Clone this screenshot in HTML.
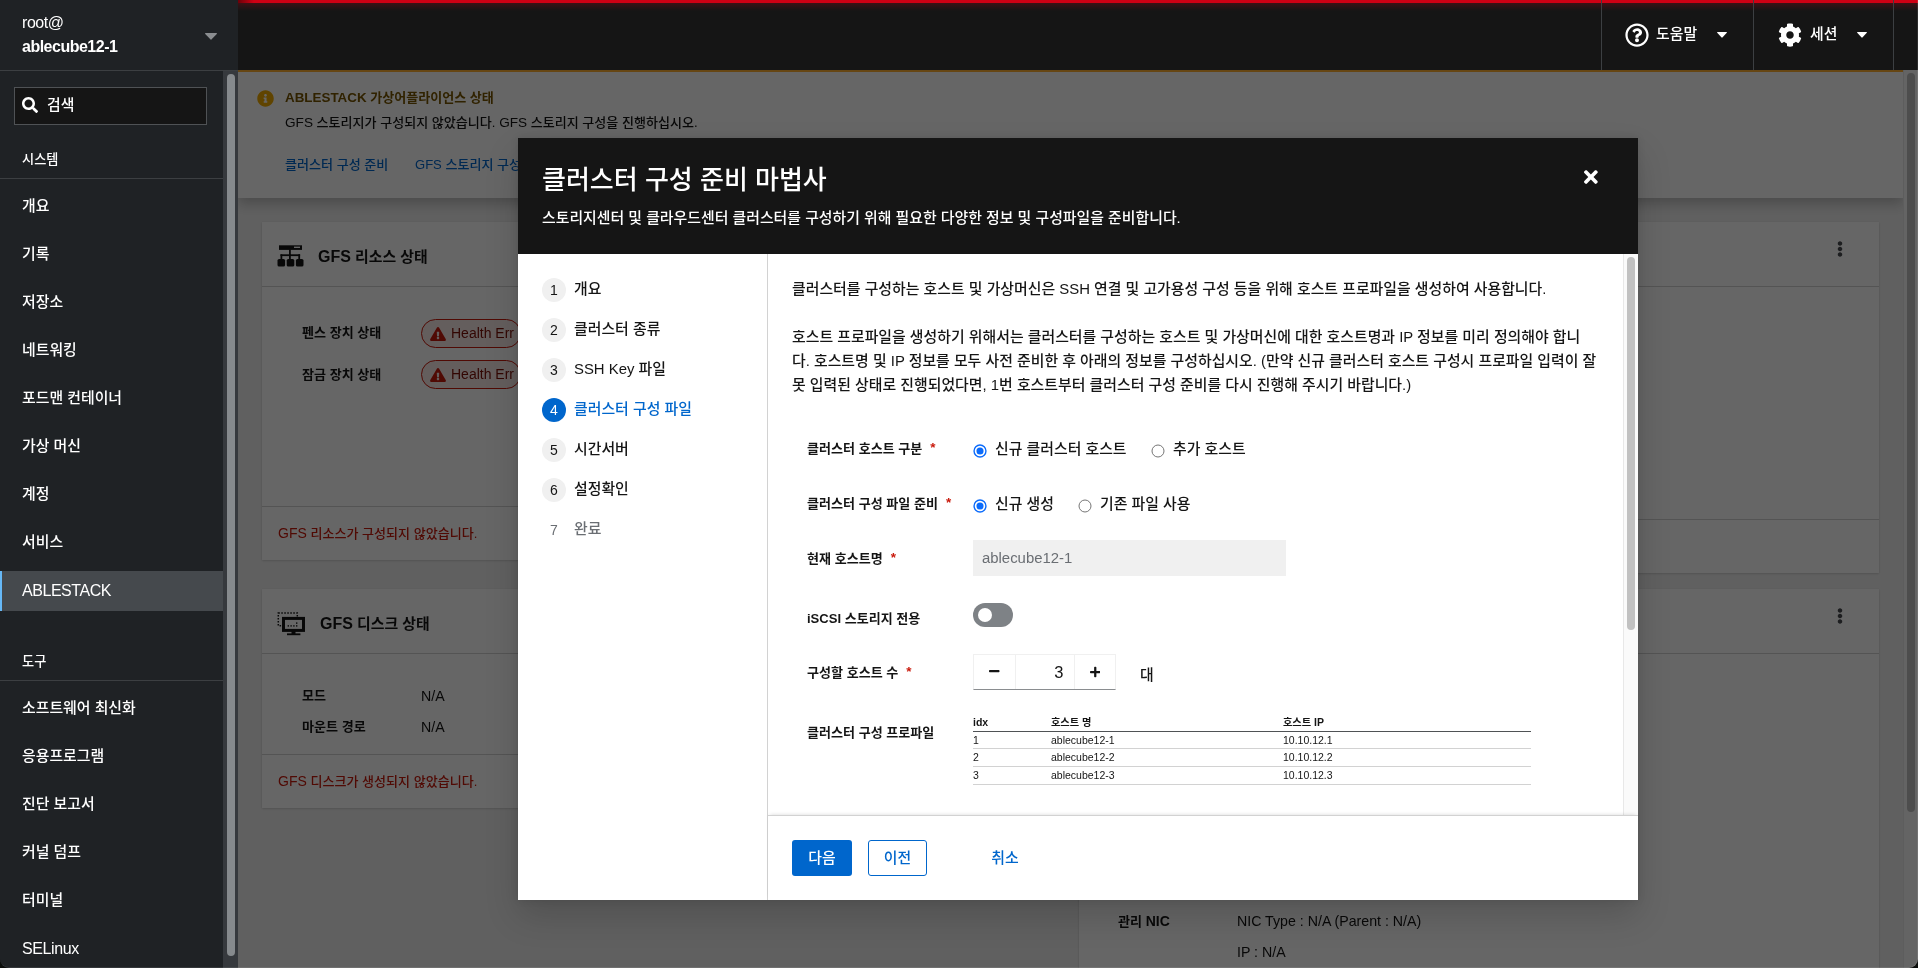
<!DOCTYPE html>
<html lang="ko">
<head>
<meta charset="utf-8">
<title>ABLESTACK - ablecube12-1</title>
<style>
*{box-sizing:border-box;margin:0;padding:0}
html,body{width:1918px;height:968px;overflow:hidden;background:#151515}
body{position:relative;font-family:"Liberation Sans","Noto Sans CJK KR",sans-serif;font-size:16px;font-weight:500;color:#151515;-webkit-font-smoothing:antialiased}
.abs{position:absolute}
svg{display:block}
/* ---------- shell: sidebar ---------- */
#side{position:absolute;left:0;top:0;width:238px;height:968px;background:#1f2225;color:#fff}
#hostsel{position:absolute;left:0;top:0;width:238px;height:71px;border-bottom:1px solid #3c3f42}
#hostsel .u{position:absolute;left:22px;top:12px;font-size:16px;line-height:22px;color:#fff;letter-spacing:-.45px}
#hostsel .h{position:absolute;left:22px;top:35px;font-size:16px;line-height:24px;font-weight:700;color:#fff;letter-spacing:-.5px}
#sbtrack{position:absolute;left:223px;top:71px;width:15px;height:897px;background:#36393d}
#sbthumb{position:absolute;left:4px;top:3px;width:8px;height:882px;border-radius:4px;background:#868a8d}
#search{position:absolute;left:14px;top:87px;width:193px;height:38px;background:#151515;border:1px solid #4f5255}
#search span{position:absolute;left:32px;top:5px;font-weight:500;font-size:14.9px;line-height:24px;color:#fff}
.sect{position:absolute;left:22px;font-size:13.2px;line-height:20px;font-weight:500;color:#fff}
.sline{position:absolute;left:0;width:223px;height:1px;background:#3c3f42}
.ni{position:absolute;left:0;width:223px;height:40px;padding:8px 0 8px 22px;font-weight:500;font-size:14.9px;line-height:24px;color:#fff;white-space:nowrap}
.ni.act{background:#45494d;border-left:2px solid #66b8f6;padding-left:20px;font-weight:400;font-size:16px;letter-spacing:-.45px}
/* ---------- shell: top bar ---------- */
#top{position:absolute;left:238px;top:0;width:1680px;height:70px;background:#151515;color:#fff}
#redbar{position:absolute;left:0;top:0;width:1680px;height:3px;background:linear-gradient(90deg,#6d0008 0,#d00014 16px,#d00014 100%)}
#redglow{position:absolute;left:0;top:3px;width:1680px;height:8px;background:linear-gradient(180deg,rgba(208,0,20,.22),rgba(208,0,20,0))}
.vdiv{position:absolute;top:0;width:1px;height:70px;background:#3c3f42}
.tb{position:absolute;top:22px;font-weight:500;font-size:14.9px;line-height:24px;color:#fff;white-space:nowrap}
/* ---------- page content (under the backdrop) ---------- */
#frame{position:absolute;left:238px;top:70px;width:1680px;height:898px;background:#f0f0f0;overflow:hidden}
#alert{position:absolute;left:0;top:0;width:1665px;height:128px;background:#fff;border-top:2px solid #ffb030;box-shadow:0 6px 12px rgba(3,3,3,.22)}
#alert .t{position:absolute;left:47px;top:15px;font-size:13.05px;line-height:21px;font-weight:700;color:#795600;white-space:nowrap}
#alert .d{position:absolute;left:47px;top:40px;font-size:13.05px;line-height:21px;color:#151515;white-space:nowrap}
#alert .a{position:absolute;top:82px;font-size:13.05px;line-height:21px;color:#06c;white-space:nowrap}
.card{position:absolute;background:#fff;box-shadow:0 1px 2px rgba(3,3,3,.12),0 0 2px rgba(3,3,3,.06)}
.card .hl{position:absolute;left:0;right:0;height:1px;background:#d2d2d2}
.ct{position:absolute;font-size:14.9px;line-height:24px;font-weight:700;color:#151515;white-space:nowrap}
.lb{position:absolute;font-size:13.05px;line-height:21px;font-weight:700;color:#151515;white-space:nowrap}
.vl{position:absolute;font-size:13.05px;line-height:21px;color:#151515;white-space:nowrap}
.err{position:absolute;font-size:13.05px;line-height:21px;color:#c9190b;white-space:nowrap}
.badge{position:absolute;left:159px;width:100px;height:29px;border:1px solid #c9190b;border-radius:15px;background:#faeae8;color:#7d1007;font-size:14px;line-height:27px;padding-left:29px;white-space:nowrap}
.badge svg{position:absolute;left:8px;top:7px}
#vsb{position:absolute;left:1665px;top:0;width:15px;height:898px;background:#fafafa;border-left:1px solid #e8e8e8}
#vsb i{position:absolute;left:3px;top:3px;width:8px;height:739px;border-radius:4px;background:#c1c1c1}
#backdrop{position:absolute;left:0;top:0;width:1665px;height:898px;background:rgba(0,0,0,.6)}
#vsbdim{position:absolute;left:1665px;top:0;width:15px;height:898px;background:rgba(0,0,0,.6)}
/* ---------- modal ---------- */
#modal{position:absolute;left:518px;top:138px;width:1120px;height:762px;background:#fff;box-shadow:0 16px 32px rgba(3,3,3,.16),0 0 8px rgba(3,3,3,.1)}
#mh{position:absolute;left:0;top:0;width:1120px;height:116px;background:#151515;color:#fff}
#mh .ti{position:absolute;left:24px;top:24px;font-size:26px;line-height:36px;font-weight:500;white-space:nowrap}
#mh .de{position:absolute;left:24px;top:68px;font-size:14.9px;line-height:24px;white-space:nowrap}
#nav{position:absolute;left:0;top:116px;width:250px;height:646px;border-right:1px solid #d2d2d2;background:#fff}
.st{position:absolute;left:24px;height:24px;white-space:nowrap;font-size:14.9px;line-height:24px;color:#151515}
.st b{position:absolute;left:0;top:0;width:24px;height:24px;border-radius:12px;background:#f0f0f0;font-weight:400;font-size:14px;line-height:24px;text-align:center;color:#151515}
.st span{position:absolute;left:32px;top:-1px}
.st.cur{color:#06c}
.st.cur b{background:#06c;color:#fff}
.st.dis{color:#6a6e73}
.st.dis b{background:transparent;color:#6a6e73}
#main{position:absolute;left:250px;top:116px;width:855px;height:561px;background:#fff;overflow:hidden}
#main p{position:absolute;left:24px;font-size:14.9px;line-height:24px;color:#151515;white-space:nowrap}
.fl{position:absolute;left:39px;font-size:13.05px;line-height:21px;font-weight:700;color:#151515;white-space:nowrap}
.fl em{font-style:normal;font-weight:700;color:#c9190b;margin-left:8px;font-size:13.5px;position:relative;top:-1px}
.rt{position:absolute;font-size:14.9px;line-height:24px;color:#151515;white-space:nowrap}
.rd{position:absolute;width:13px;height:13px;border-radius:50%;border:1px solid #767676;background:#fff}
.rd.on{border:1px solid #0075ff}
.rd.on::after{content:"";position:absolute;left:2px;top:2px;width:7px;height:7px;border-radius:50%;background:#0075ff}
#msb{position:absolute;left:1105px;top:116px;width:15px;height:561px;background:#fafafa;border-left:1px solid #e8e8e8}
#msb i{position:absolute;left:3px;top:3px;width:8px;height:373px;border-radius:4px;background:#c1c1c1}
#mf{position:absolute;left:250px;top:677px;width:870px;height:85px;background:#fff;border-top:1px solid #d2d2d2;box-shadow:0 -2px 4px -2px rgba(3,3,3,.16)}
.btn{position:absolute;top:24px;height:36px;border-radius:3px;font-size:14.9px;line-height:36px;text-align:center;white-space:nowrap}
table{position:absolute;left:205px;top:347px;width:558px;border-collapse:separate;border-spacing:0;font-size:10.5px;line-height:13px;color:#151515}
th{font-weight:700;text-align:left;padding:0;border-bottom:1px solid #4f5255;height:19px;vertical-align:middle}
td{padding:0;height:18px;border-bottom:1px solid #d2d2d2;vertical-align:middle}
</style>
</head>
<body>
<div id="root" style="position:absolute;left:0;top:0;width:1918px;height:968px;will-change:transform">

<!-- ================= SIDEBAR ================= -->
<div id="side">
  <div id="hostsel">
    <div class="u">root@</div>
    <div class="h">ablecube12-1</div>
    <svg class="abs" style="left:205px;top:33px" width="12" height="7" viewBox="0 0 12 7"><path d="M0.6 0h10.8c.5 0 .8.6.4 1L6.4 6.6c-.2.3-.6.3-.8 0L.2 1C-.2.6.1 0 .6 0z" fill="#8a8d90"/></svg>
  </div>
  <div id="sbtrack"><div id="sbthumb"></div></div>
  <div id="search">
    <svg class="abs" style="left:7px;top:9px" width="16" height="16" viewBox="0 0 512 512"><path fill="#fff" d="M505 442.7L405.3 343c-4.500-4.500-10.600-7-17-7H372c27.600-35.300 44-79.700 44-128C416 93.100 322.900 0 208 0S0 93.100 0 208s93.100 208 208 208c48.300 0 92.700-16.400 128-44v16.300c0 6.400 2.500 12.500 7 17l99.700 99.700c9.400 9.400 24.600 9.400 33.900 0l28.300-28.300c9.400-9.400 9.400-24.600.1-34zM208 336c-70.700 0-128-57.200-128-128 0-70.700 57.200-128 128-128 70.700 0 128 57.200 128 128 0 70.700-57.200 128-128 128z"/></svg>
    <span>검색</span>
  </div>
  <div class="sect" style="top:150px">시스템</div>
  <div class="sline" style="top:178px"></div>
  <div class="ni" style="top:186px">개요</div>
  <div class="ni" style="top:234px">기록</div>
  <div class="ni" style="top:282px">저장소</div>
  <div class="ni" style="top:330px">네트워킹</div>
  <div class="ni" style="top:378px">포드맨 컨테이너</div>
  <div class="ni" style="top:426px">가상 머신</div>
  <div class="ni" style="top:474px">계정</div>
  <div class="ni" style="top:522px">서비스</div>
  <div class="ni act" style="top:571px;padding-top:8px;padding-bottom:8px">ABLESTACK</div>
  <div class="sect" style="top:652px">도구</div>
  <div class="sline" style="top:680px"></div>
  <div class="ni" style="top:688px">소프트웨어 최신화</div>
  <div class="ni" style="top:736px">응용프로그램</div>
  <div class="ni" style="top:784px">진단 보고서</div>
  <div class="ni" style="top:832px">커널 덤프</div>
  <div class="ni" style="top:880px">터미널</div>
  <div class="ni" style="top:929px;font-weight:400;font-size:16px;letter-spacing:-.4px">SELinux</div>
</div>

<!-- ================= TOP BAR ================= -->
<div id="top">
  <div id="redbar"></div>
  <div id="redglow"></div>
  <div class="vdiv" style="left:1363px"></div>
  <div class="vdiv" style="left:1515px"></div>
  <div class="vdiv" style="left:1655px"></div>
  <svg class="abs" style="left:1387px;top:23px" width="24" height="24" viewBox="0 0 512 512"><path fill="#fff" d="M256 8C119.043 8 8 119.083 8 256c0 136.997 111.043 248 248 248s248-111.003 248-248C504 119.083 392.957 8 256 8zm0 448c-110.532 0-200-89.431-200-200 0-110.495 89.472-200 200-200 110.491 0 200 89.471 200 200 0 110.530-89.431 200-200 200zm107.244-255.200c0 67.052-72.421 68.084-72.421 92.863V300c0 6.627-5.373 12-12 12h-45.647c-6.627 0-12-5.373-12-12v-8.659c0-35.745 27.100-50.034 47.579-61.516 17.561-9.845 28.324-16.541 28.324-29.579 0-17.246-21.999-28.693-39.784-28.693-23.189 0-33.894 10.977-48.942 29.969-4.057 5.120-11.460 6.071-16.666 2.124l-27.824-21.098c-5.107-3.872-6.251-11.066-2.644-16.363C184.846 131.491 214.940 112 261.794 112c49.071 0 101.450 38.304 101.450 88.800zM298 368c0 23.159-18.841 42-42 42s-42-18.841-42-42 18.841-42 42-42 42 18.841 42 42z"/></svg>
  <div class="tb" style="left:1418px">도움말</div>
  <svg class="abs" style="left:1479px;top:32px" width="10" height="6" viewBox="0 0 10 6"><path d="M.5 0h9c.4 0 .6.5.3.8L5.400 5.600c-.2.200-.6.200-.8 0L.2.800C-.1.500.1 0 .5 0z" fill="#fff"/></svg>
  <svg class="abs" style="left:1540px;top:23px" width="24" height="24" viewBox="0 0 512 512"><path fill="#fff" d="M487.400 315.700l-42.600-24.600c4.300-23.200 4.300-47 0-70.200l42.600-24.600c4.900-2.800 7.100-8.600 5.500-14-11.100-35.600-30-67.800-54.700-94.600-3.800-4.100-10-5.100-14.800-2.300L380.800 110c-17.900-15.400-38.500-27.300-60.800-35.100V25.800c0-5.600-3.900-10.500-9.400-11.700-36.700-8.200-74.300-7.800-109.200 0-5.500 1.200-9.400 6.100-9.400 11.700V75c-22.200 7.900-42.800 19.800-60.800 35.100L88.700 85.500c-4.900-2.800-11-1.900-14.800 2.300-24.700 26.700-43.600 58.900-54.700 94.600-1.700 5.400.6 11.200 5.500 14L67.300 221c-4.300 23.200-4.300 47 0 70.200l-42.600 24.600c-4.900 2.800-7.100 8.600-5.500 14 11.100 35.600 30 67.800 54.700 94.600 3.800 4.100 10 5.100 14.800 2.300l42.600-24.600c17.900 15.400 38.500 27.300 60.800 35.100v49.200c0 5.600 3.900 10.500 9.400 11.700 36.700 8.200 74.300 7.800 109.200 0 5.500-1.200 9.400-6.100 9.400-11.700v-49.200c22.200-7.900 42.800-19.800 60.800-35.100l42.600 24.600c4.900 2.800 11 1.900 14.800-2.300 24.700-26.700 43.600-58.900 54.700-94.600 1.500-5.500-.7-11.300-5.600-14.100zM256 336c-44.100 0-80-35.900-80-80s35.900-80 80-80 80 35.900 80 80-35.900 80-80 80z"/></svg>
  <div class="tb" style="left:1572px">세션</div>
  <svg class="abs" style="left:1619px;top:32px" width="10" height="6" viewBox="0 0 10 6"><path d="M.5 0h9c.4 0 .6.5.3.8L5.400 5.600c-.2.200-.6.200-.8 0L.2.800C-.1.500.1 0 .5 0z" fill="#fff"/></svg>
</div>

<!-- ================= PAGE (iframe area) ================= -->
<div id="frame">
  <div id="alert">
    <svg class="abs" style="left:18.500px;top:17.500px" width="17" height="17" viewBox="0 0 512 512"><path fill="#f0ab00" d="M256 8C119.043 8 8 119.083 8 256c0 136.997 111.043 248 248 248s248-111.003 248-248C504 119.083 392.957 8 256 8zm0 110c23.196 0 42 18.804 42 42s-18.804 42-42 42-42-18.804-42-42 18.804-42 42-42zm56 254c0 6.627-5.373 12-12 12h-88c-6.627 0-12-5.373-12-12v-24c0-6.627 5.373-12 12-12h12v-64h-12c-6.627 0-12-5.373-12-12v-24c0-6.627 5.373-12 12-12h64c6.627 0 12 5.373 12 12v100h12c6.627 0 12 5.373 12 12v24z"/></svg>
    <div class="t"><span style="font-size:13.400px">ABLESTACK</span> 가상어플라이언스 상태</div>
    <div class="d"><span style="font-size:13.600px">GFS</span> 스토리지가 구성되지 않았습니다. <span style="font-size:13.600px">GFS</span> 스토리지 구성을 진행하십시오.</div>
    <div class="a" style="left:47px">클러스터 구성 준비</div>
    <div class="a" style="left:177px">GFS 스토리지 구성</div>
  </div>

  <!-- left column cards -->
  <div class="card" style="left:24px;top:152px;width:800px;height:338px"><div class="abs" style="left:0;top:-1px;width:800px;height:339px">
    <svg class="abs" style="left:15px;top:24px" width="27" height="22" viewBox="0 0 27 22"><g fill="#151515"><rect x="2" y=".3" width="23" height="4.600"/><rect x="12" y="4.500" width="1.800" height="6"/><rect x="3.500" y="9.300" width="19.600" height="1.800"/><rect x="3.500" y="9.300" width="1.800" height="5"/><rect x="21.300" y="9.300" width="1.800" height="5"/><rect x="12" y="9.300" width="1.800" height="5"/><rect x=".5" y="14" width="7.600" height="7.600" rx="1.600"/><rect x="9.700" y="14" width="7.600" height="7.600" rx="1.600"/><rect x="18.900" y="14" width="7.600" height="7.600" rx="1.600"/></g><rect x="17" y="1.600" width="6" height="1.400" fill="#fff"/></svg>
    <div class="ct" style="left:56px;top:24px"><span style="font-size:16px">GFS</span> 리소스 상태</div>
    <div class="hl" style="top:65px"></div>
    <div class="lb" style="left:40px;top:101px">펜스 장치 상태</div>
    <div class="badge" style="top:98px"><svg width="16" height="14" viewBox="0 0 576 512"><path fill="#c9190b" d="M569.517 440.013C587.975 472.007 564.806 512 527.940 512H48.054c-36.937 0-59.999-40.055-41.577-71.987L246.423 23.985c18.467-32.009 64.720-31.951 83.154 0l239.940 416.028zM288 354c-25.405 0-46 20.595-46 46s20.595 46 46 46 46-20.595 46-46-20.595-46-46-46zm-43.673-165.346l7.418 136c.347 6.364 5.609 11.346 11.982 11.346h48.546c6.373 0 11.635-4.982 11.982-11.346l7.418-136c.375-6.874-5.098-12.654-11.982-12.654h-63.383c-6.884 0-12.356 5.780-11.981 12.654z"/></svg>Health Err</div>
    <div class="lb" style="left:40px;top:143px">잠금 장치 상태</div>
    <div class="badge" style="top:139px"><svg width="16" height="14" viewBox="0 0 576 512"><path fill="#c9190b" d="M569.517 440.013C587.975 472.007 564.806 512 527.940 512H48.054c-36.937 0-59.999-40.055-41.577-71.987L246.423 23.985c18.467-32.009 64.720-31.951 83.154 0l239.940 416.028zM288 354c-25.405 0-46 20.595-46 46s20.595 46 46 46 46-20.595 46-46-20.595-46-46-46zm-43.673-165.346l7.418 136c.347 6.364 5.609 11.346 11.982 11.346h48.546c6.373 0 11.635-4.982 11.982-11.346l7.418-136c.375-6.874-5.098-12.654-11.982-12.654h-63.383c-6.884 0-12.356 5.780-11.981 12.654z"/></svg>Health Err</div>
    <div class="hl" style="top:285px"></div>
    <div class="err" style="left:16px;top:302px"><span style="font-size:14px">GFS</span> 리소스가 구성되지 않았습니다.</div>
  </div></div>

  <div class="card" style="left:24px;top:519px;width:800px;height:219px">
    <svg class="abs" style="left:15px;top:23px" width="29" height="24" viewBox="0 0 29 24"><rect x="1.300" y="1" width="19" height="12.800" fill="none" stroke="#151515" stroke-width="1.500" stroke-dasharray="1.500 1.500"/><rect x="6.500" y="6.400" width="20" height="12" fill="#fff" stroke="#151515" stroke-width="3"/><g fill="#151515"><rect x="10.600" y="13.200" width="1.400" height="1.400"/><rect x="13.400" y="13.200" width="1.400" height="1.400"/><rect x="16.200" y="13.200" width="1.400" height="1.400"/><rect x="19" y="13.200" width="1.400" height="1.400"/><rect x="19" y="10.400" width="1.400" height="1.400"/></g><rect x="14.500" y="19" width="4" height="3" fill="#151515"/><rect x="10" y="21.400" width="13.400" height="1.800" fill="#151515"/></svg>
    <div class="ct" style="left:58px;top:23px"><span style="font-size:16px">GFS</span> 디스크 상태</div>
    <div class="hl" style="top:64px"></div>
    <div class="lb" style="left:40px;top:96px">모드</div>
    <div class="vl" style="left:159px;top:97px;font-size:14.2px">N/A</div>
    <div class="lb" style="left:40px;top:127px">마운트 경로</div>
    <div class="vl" style="left:159px;top:128px;font-size:14.2px">N/A</div>
    <div class="hl" style="top:165px"></div>
    <div class="err" style="left:16px;top:182px"><span style="font-size:14px">GFS</span> 디스크가 생성되지 않았습니다.</div>
  </div>

  <!-- right column cards -->
  <div class="card" style="left:841px;top:152px;width:800px;height:351px"><div class="abs" style="left:0;top:-1px;width:800px;height:352px">
        <svg class="abs" style="left:758px;top:20px" width="6" height="16" viewBox="0 0 192 512"><path fill="#4a4d50" d="M96 184c39.800 0 72 32.200 72 72s-32.200 72-72 72-72-32.200-72-72 32.200-72 72-72zM24 80c0 39.800 32.200 72 72 72s72-32.200 72-72S135.800 8 96 8 24 40.200 24 80zm0 352c0 39.800 32.200 72 72 72s72-32.200 72-72-32.200-72-72-72-72 32.200-72 72z"/></svg>
    <div class="hl" style="top:65px"></div>
    <div class="hl" style="top:298px"></div>
  </div></div>
  <div class="card" style="left:841px;top:519px;width:800px;height:420px">
        <svg class="abs" style="left:758px;top:19px" width="6" height="16" viewBox="0 0 192 512"><path fill="#4a4d50" d="M96 184c39.800 0 72 32.200 72 72s-32.200 72-72 72-72-32.200-72-72 32.200-72 72-72zM24 80c0 39.800 32.200 72 72 72s72-32.200 72-72S135.800 8 96 8 24 40.200 24 80zm0 352c0 39.800 32.200 72 72 72s72-32.200 72-72-32.200-72-72-72-72 32.200-72 72z"/></svg>
    <div class="hl" style="top:64px"></div>
    <div class="lb" style="left:39px;top:322px">관리 <span style="font-size:14px">NIC</span></div>
    <div class="vl" style="left:158px;top:322px;font-size:14.2px">NIC Type : N/A (Parent : N/A)</div>
    <div class="vl" style="left:158px;top:353px;font-size:14.2px">IP : N/A</div>
  </div>

  <div id="vsb"><i></i></div>
  <div id="backdrop"></div>
  <div id="vsbdim"></div>
</div>

<!-- ================= MODAL ================= -->
<div id="modal">
  <div id="mh">
    <div class="ti">클러스터 구성 준비 마법사</div>
    <div class="de">스토리지센터 및 클라우드센터 클러스터를 구성하기 위해 필요한 다양한 정보 및 구성파일을 준비합니다.</div>
    <svg class="abs" style="left:1066.300px;top:28.700px" width="13.750" height="20" viewBox="0 0 352 512"><path fill="#fff" d="M242.720 256l100.070-100.070c12.280-12.280 12.280-32.190 0-44.480l-22.240-22.240c-12.280-12.280-32.190-12.280-44.480 0L176 189.280 75.930 89.210c-12.280-12.280-32.190-12.280-44.480 0L9.210 111.450c-12.280 12.280-12.280 32.190 0 44.480L109.280 256 9.210 356.070c-12.280 12.280-12.280 32.190 0 44.480l22.240 22.240c12.280 12.280 32.200 12.280 44.480 0L176 322.720l100.070 100.070c12.280 12.280 32.200 12.280 44.480 0l22.240-22.240c12.280-12.280 12.280-32.190 0-44.480L242.720 256z"/></svg>
  </div>

  <div id="nav">
    <div class="st" style="top:24px"><b>1</b><span>개요</span></div>
    <div class="st" style="top:64px"><b>2</b><span>클러스터 종류</span></div>
    <div class="st" style="top:104px"><b>3</b><span>SSH Key 파일</span></div>
    <div class="st cur" style="top:144px"><b>4</b><span>클러스터 구성 파일</span></div>
    <div class="st" style="top:184px"><b>5</b><span>시간서버</span></div>
    <div class="st" style="top:224px"><b>6</b><span>설정확인</span></div>
    <div class="st dis" style="top:264px"><b>7</b><span>완료</span></div>
  </div>

  <div id="main">
    <p style="top:23px">클러스터를 구성하는 호스트 및 가상머신은 SSH 연결 및 고가용성 구성 등을 위해 호스트 프로파일을 생성하여 사용합니다.</p>
    <p style="top:71px">호스트 프로파일을 생성하기 위해서는 클러스터를 구성하는 호스트 및 가상머신에 대한 호스트명과 IP 정보를 미리 정의해야 합니<br>다. 호스트명 및 IP 정보를 모두 사전 준비한 후 아래의 정보를 구성하십시오. (만약 신규 클러스터 호스트 구성시 프로파일 입력이 잘<br>못 입력된 상태로 진행되었다면, 1번 호스트부터 클러스터 구성 준비를 다시 진행해 주시기 바랍니다.)</p>

    <div class="fl" style="top:184px">클러스터 호스트 구분<em>*</em></div>
    <svg class="abs" style="left:205px;top:189.8px" width="14" height="14" viewBox="0 0 14 14"><circle cx="7" cy="7" r="5.950" fill="#fff" stroke="#0b6bfb" stroke-width="1.400"/><circle cx="7" cy="7" r="3.550" fill="#0b6bfb"/></svg>
    <div class="rt" style="left:227px;top:183px">신규 클러스터 호스트</div>
    <svg class="abs" style="left:383px;top:189.8px" width="14" height="14" viewBox="0 0 14 14"><circle cx="7" cy="7" r="6" fill="#fff" stroke="#767676" stroke-width="1"/></svg>
    <div class="rt" style="left:405px;top:183px">추가 호스트</div>

    <div class="fl" style="top:239px">클러스터 구성 파일 준비<em>*</em></div>
    <svg class="abs" style="left:205px;top:244.8px" width="14" height="14" viewBox="0 0 14 14"><circle cx="7" cy="7" r="5.950" fill="#fff" stroke="#0b6bfb" stroke-width="1.400"/><circle cx="7" cy="7" r="3.550" fill="#0b6bfb"/></svg>
    <div class="rt" style="left:227px;top:238px">신규 생성</div>
    <svg class="abs" style="left:310px;top:244.8px" width="14" height="14" viewBox="0 0 14 14"><circle cx="7" cy="7" r="6" fill="#fff" stroke="#767676" stroke-width="1"/></svg>
    <div class="rt" style="left:332px;top:238px">기존 파일 사용</div>

    <div class="fl" style="top:294px">현재 호스트명<em>*</em></div>
    <div class="abs" style="left:205px;top:286px;width:313px;height:36px;background:#f0f0f0;color:#6a6e73;font-size:14.9px;line-height:36px;padding-left:9px">ablecube12-1</div>

    <div class="fl" style="top:354px">iSCSI 스토리지 전용</div>
    <div class="abs" style="left:205px;top:349px;width:40px;height:24px;border-radius:12px;background:#7e8286"><div class="abs" style="left:5px;top:5px;width:14px;height:14px;border-radius:7px;background:#fff"></div></div>

    <div class="fl" style="top:408px">구성할 호스트 수<em>*</em></div>
    <div class="abs" style="left:205px;top:400px;width:143px;height:36px;border:1px solid #f0f0f0;border-bottom:1px solid #8a8d90">
      <div class="abs" style="left:41px;top:0;width:1px;height:34px;background:#f0f0f0"></div>
      <div class="abs" style="left:100px;top:0;width:1px;height:34px;background:#f0f0f0"></div>
      <svg class="abs" style="left:15.050px;top:10.200px" width="10.500" height="12" viewBox="0 0 448 512"><path fill="#151515" d="M416 208H32c-17.670 0-32 14.330-32 32v32c0 17.670 14.330 32 32 32h384c17.670 0 32-14.330 32-32v-32c0-17.670-14.330-32-32-32z"/></svg>
      <svg class="abs" style="left:115.650px;top:10.600px" width="10.500" height="12" viewBox="0 0 448 512"><path fill="#151515" d="M416 208H272V64c0-17.670-14.330-32-32-32h-32c-17.670 0-32 14.330-32 32v144H32c-17.670 0-32 14.330-32 32v32c0 17.670 14.330 32 32 32h144v144c0 17.670 14.330 32 32 32h32c17.670 0 32-14.330 32-32V304h144c17.670 0 32-14.330 32-32v-32c0-17.670-14.330-32-32-32z"/></svg>
      
      <div class="abs" style="left:42px;top:5px;width:47.500px;font-size:16.500px;line-height:24px;text-align:right;color:#151515">3</div>
    </div>
    <div class="rt" style="left:372px;top:409px">대</div>

    <div class="fl" style="top:468px">클러스터 구성 프로파일</div>
    <table style="top:459px">
      <tr><th style="width:78px">idx</th><th style="width:232px"><span style="font-size:10.2px">호스트 명</span></th><th><span style="font-size:10.2px">호스트</span> IP</th></tr>
      <tr><td style="height:17px">1</td><td style="height:17px">ablecube12-1</td><td style="height:17px">10.10.12.1</td></tr>
      <tr><td>2</td><td>ablecube12-2</td><td>10.10.12.2</td></tr>
      <tr><td>3</td><td>ablecube12-3</td><td>10.10.12.3</td></tr>
    </table>
  </div>
  <div id="msb"><i></i></div>

  <div id="mf">
    <div class="btn" style="left:24px;width:60px;background:#06c;color:#fff">다음</div>
    <div class="btn" style="left:100px;width:59px;border:1px solid #06c;color:#06c;line-height:34px">이전</div>
    <div class="btn" style="left:207px;width:60px;color:#06c">취소</div>
  </div>
</div>

<div style="position:absolute;left:0;top:-20px;width:1918px;height:988px;border-radius:0 0 9px 9px;border-right:1px solid rgba(255,255,255,.1);border-bottom:1px solid rgba(255,255,255,.1);box-shadow:0 0 0 20px #0b0d0b"></div>
</div>
</body>
</html>
